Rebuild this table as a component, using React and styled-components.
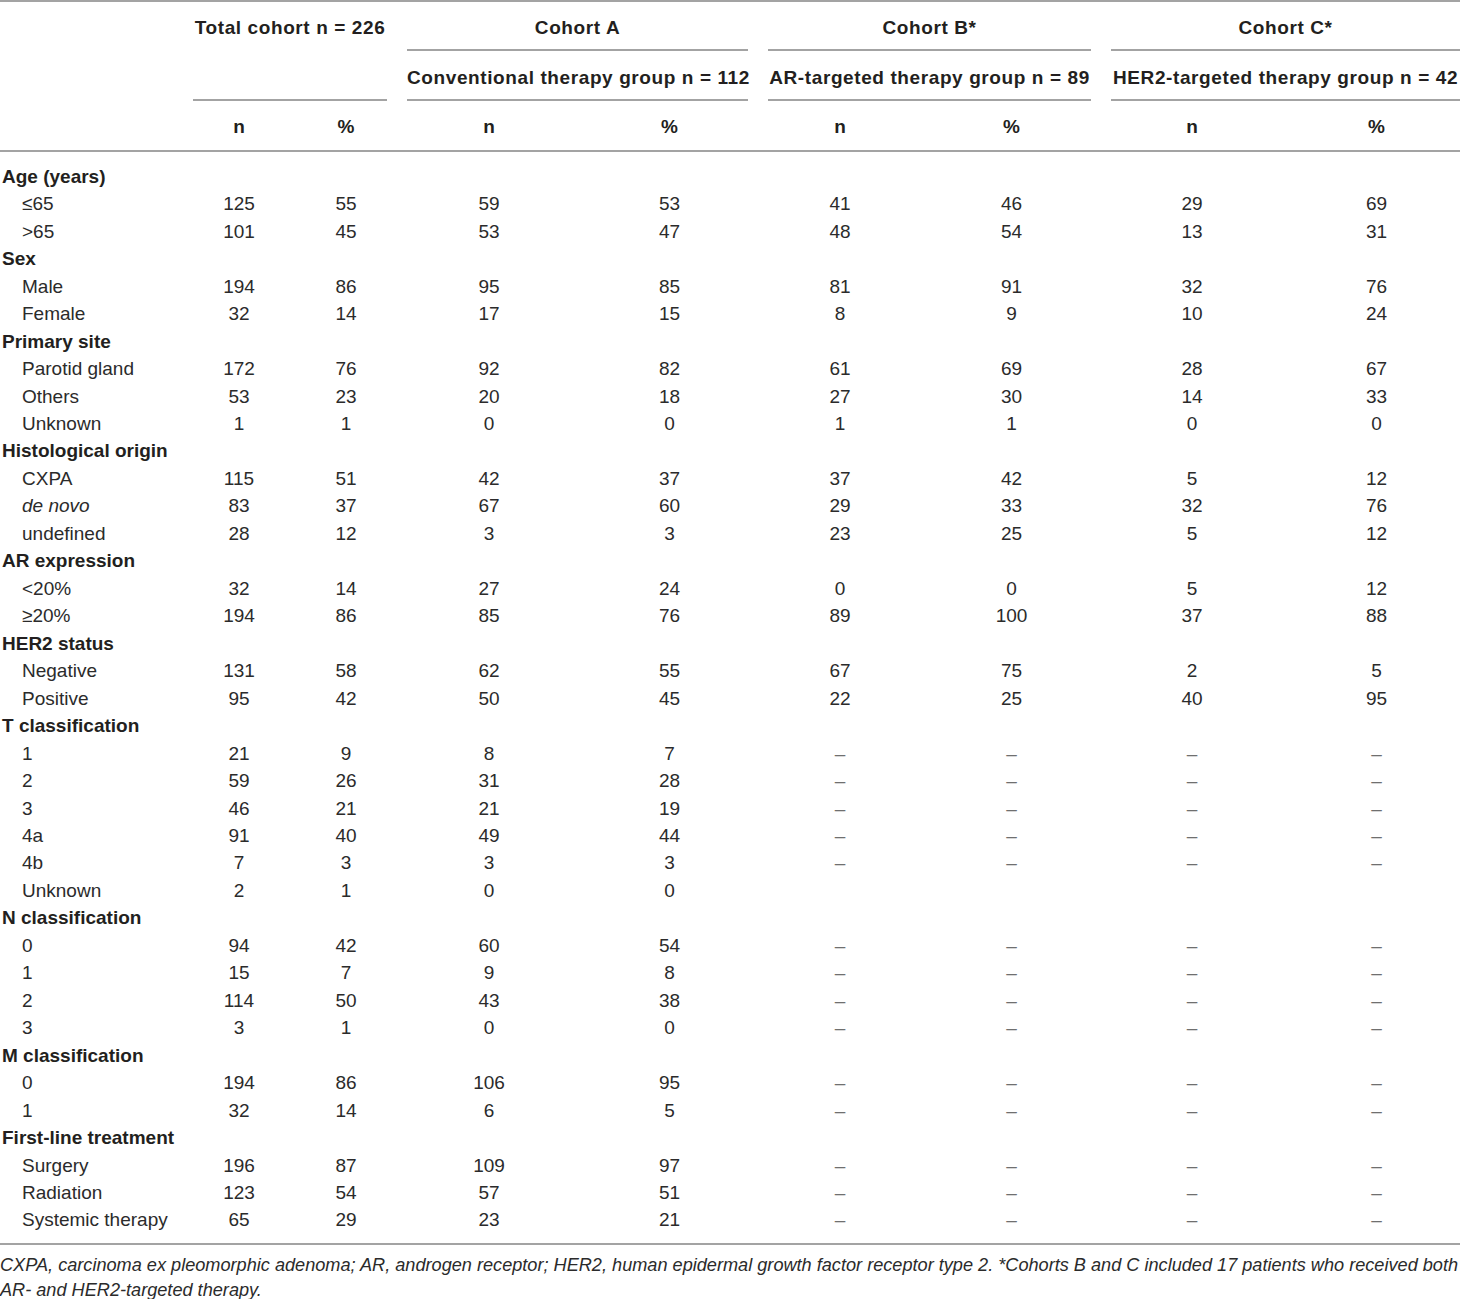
import React from "react";
import styled, { createGlobalStyle } from "styled-components";

const GlobalStyle = createGlobalStyle`
	html,
	body {
		margin: 0;
		padding: 0;
		background: #ffffff;
		overflow: hidden;
	}
	body {
		font-family: "Liberation Sans", Arial, sans-serif;
		color: #231f20;
	}
`;

const RULE = "#a3a3a3";
const D = "–";

const Page = styled.div`
	width: 100%;
	overflow: hidden;
`;

const Sheet = styled.div`
	width: 1470px;
`;

const Table = styled.table`
	width: 1470px;
	table-layout: fixed;
	border-collapse: collapse;
	border-top: 2px solid ${RULE};
	border-bottom: 2px solid ${RULE};
	font-size: 19px;
`;

const GroupHead = styled.th`
	padding: 0 10px;
	vertical-align: top;
	font-weight: 700;
	text-align: center;
`;

const HeadText = styled.div`
	height: ${(p) => (p.$tall ? "99px" : "49px")};
	line-height: 51px;
	letter-spacing: 0.6px;
	border-bottom: 2px solid ${RULE};
	box-sizing: border-box;
	white-space: nowrap;
`;

const SubHead = styled.th`
	height: 47px;
	padding: 0;
	padding-top: 2px;
	font-weight: 700;
	text-align: center;
	border-bottom: 2px solid ${RULE};
`;

const Row = styled.tr`
	height: ${(p) => 27.47 + (p.$padTop || 0) + (p.$padBottom || 0)}px;
`;

const Label = styled.td`
	padding: ${(p) => (p.$padTop || 0)}px 0 ${(p) => (p.$padBottom || 0)}px
		${(p) => (p.$section ? "2px" : "22px")};
	font-weight: ${(p) => (p.$section ? 700 : 400)};
	font-style: ${(p) => (p.$italic ? "italic" : "normal")};
	color: ${(p) => (p.$section ? "#231f20" : "#2b2b2b")};
	white-space: nowrap;
	line-height: 27px;
`;

const Value = styled.td`
	padding: ${(p) => (p.$padTop || 0)}px 0 ${(p) => (p.$padBottom || 0)}px;
	text-align: center;
	color: ${(p) => (p.$dash ? "#6f6f6f" : "#2b2b2b")};
	line-height: 27px;
`;

const Note = styled.p`
	margin: 8px 0 0;
	width: 1462px;
	font-size: 18.15px;
	line-height: 25px;
	font-style: italic;
	color: #2b2b2b;
`;

const widths = [183, 112, 102, 184, 177, 164, 179, 182, 187];

const dashes = [D, D, D, D];

const sections = [
	{
		title: "Age (years)",
		rows: [
			["≤65", 125, 55, 59, 53, 41, 46, 29, 69],
			[">65", 101, 45, 53, 47, 48, 54, 13, 31],
		],
	},
	{
		title: "Sex",
		rows: [
			["Male", 194, 86, 95, 85, 81, 91, 32, 76],
			["Female", 32, 14, 17, 15, 8, 9, 10, 24],
		],
	},
	{
		title: "Primary site",
		rows: [
			["Parotid gland", 172, 76, 92, 82, 61, 69, 28, 67],
			["Others", 53, 23, 20, 18, 27, 30, 14, 33],
			["Unknown", 1, 1, 0, 0, 1, 1, 0, 0],
		],
	},
	{
		title: "Histological origin",
		rows: [
			["CXPA", 115, 51, 42, 37, 37, 42, 5, 12],
			["de novo", 83, 37, 67, 60, 29, 33, 32, 76],
			["undefined", 28, 12, 3, 3, 23, 25, 5, 12],
		],
	},
	{
		title: "AR expression",
		rows: [
			["<20%", 32, 14, 27, 24, 0, 0, 5, 12],
			["≥20%", 194, 86, 85, 76, 89, 100, 37, 88],
		],
	},
	{
		title: "HER2 status",
		rows: [
			["Negative", 131, 58, 62, 55, 67, 75, 2, 5],
			["Positive", 95, 42, 50, 45, 22, 25, 40, 95],
		],
	},
	{
		title: "T classification",
		rows: [
			["1", 21, 9, 8, 7, ...dashes],
			["2", 59, 26, 31, 28, ...dashes],
			["3", 46, 21, 21, 19, ...dashes],
			["4a", 91, 40, 49, 44, ...dashes],
			["4b", 7, 3, 3, 3, ...dashes],
			["Unknown", 2, 1, 0, 0, "", "", "", ""],
		],
	},
	{
		title: "N classification",
		rows: [
			["0", 94, 42, 60, 54, ...dashes],
			["1", 15, 7, 9, 8, ...dashes],
			["2", 114, 50, 43, 38, ...dashes],
			["3", 3, 1, 0, 0, ...dashes],
		],
	},
	{
		title: "M classification",
		rows: [
			["0", 194, 86, 106, 95, ...dashes],
			["1", 32, 14, 6, 5, ...dashes],
		],
	},
	{
		title: "First-line treatment",
		rows: [
			["Surgery", 196, 87, 109, 97, ...dashes],
			["Radiation", 123, 54, 57, 51, ...dashes],
			["Systemic therapy", 65, 29, 23, 21, ...dashes],
		],
	},
];

const groups = [
	{ title: "Cohort A", sub: "Conventional therapy group n = 112" },
	{ title: "Cohort B*", sub: "AR-targeted therapy group n = 89" },
	{ title: "Cohort C*", sub: "HER2-targeted therapy group n = 42" },
];

// flatten sections into rows so the first and last rows can get extra spacing
const bodyRows = sections.flatMap((s) => [
	{ section: true, label: s.title },
	...s.rows.map((r) => ({ label: r[0], values: r.slice(1) })),
]);

const App = () => {
	return (
		<Page>
			<GlobalStyle />
			<Sheet>
				<Table>
					<colgroup>
						{widths.map((w, i) => (
							<col key={i} style={{ width: w }} />
						))}
					</colgroup>
					<thead>
						<tr>
							<th rowSpan={2} />
							<GroupHead colSpan={2} rowSpan={2}>
								<HeadText $tall>Total cohort n = 226</HeadText>
							</GroupHead>
							{groups.map((g) => (
								<GroupHead key={g.title} colSpan={2}>
									<HeadText>{g.title}</HeadText>
								</GroupHead>
							))}
						</tr>
						<tr>
							{groups.map((g) => (
								<GroupHead key={g.sub} colSpan={2}>
									<HeadText>{g.sub}</HeadText>
								</GroupHead>
							))}
						</tr>
						<tr>
							<SubHead />
							{[0, 1, 2, 3].map((i) => (
								<React.Fragment key={i}>
									<SubHead>n</SubHead>
									<SubHead>%</SubHead>
								</React.Fragment>
							))}
						</tr>
					</thead>
					<tbody>
						{bodyRows.map((row, i) => {
							const padTop = i === 0 ? 11 : 0;
							const padBottom = i === bodyRows.length - 1 ? 10 : 0;
							return (
								<Row key={i} $padTop={padTop} $padBottom={padBottom}>
									<Label
										$section={row.section}
										$italic={row.label === "de novo"}
										$padTop={padTop}
										$padBottom={padBottom}
									>
										{row.label}
									</Label>
									{(row.values || ["", "", "", "", "", "", "", ""]).map((v, j) => (
										<Value
											key={j}
											$dash={v === D}
											$padTop={padTop}
											$padBottom={padBottom}
										>
											{v}
										</Value>
									))}
								</Row>
							);
						})}
					</tbody>
				</Table>
				<Note>
					CXPA, carcinoma ex pleomorphic adenoma; AR, androgen receptor; HER2,
					human epidermal growth factor receptor type 2. *Cohorts B and C
					included 17 patients who received both AR- and HER2-targeted therapy.
				</Note>
			</Sheet>
		</Page>
	);
};

export default App;
